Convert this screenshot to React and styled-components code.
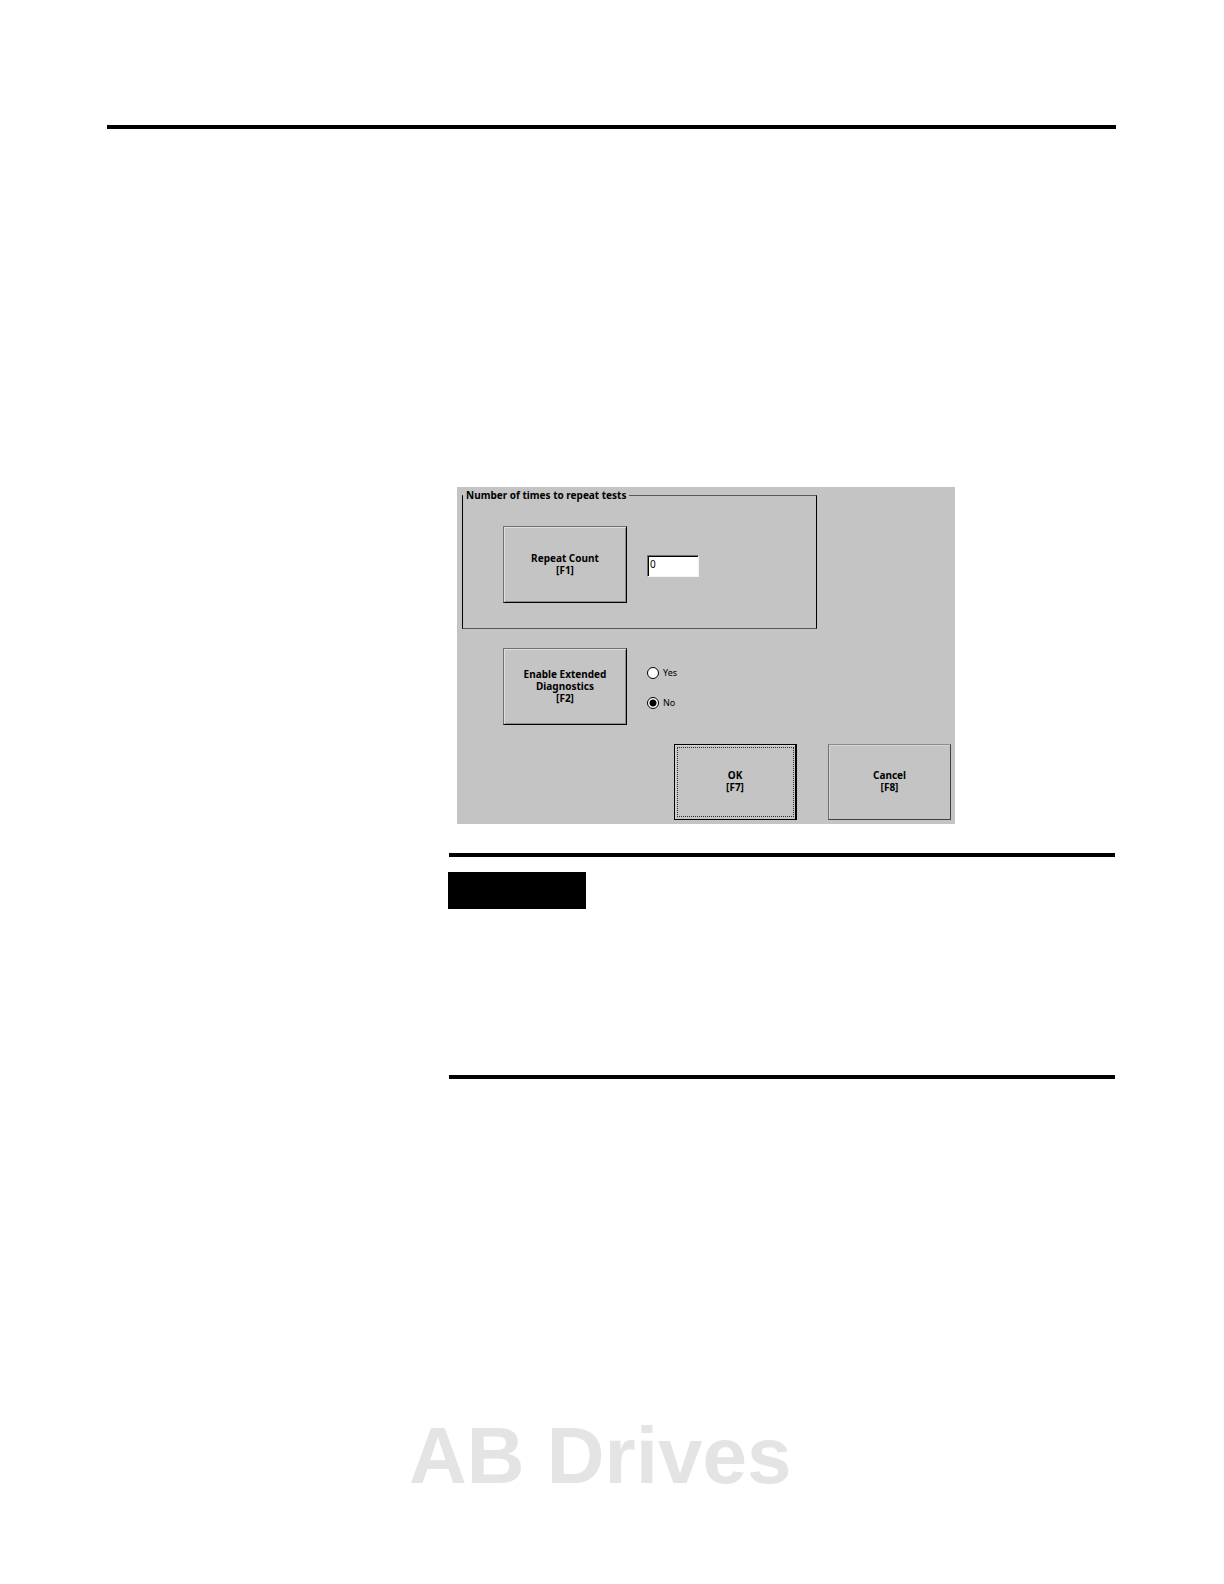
import React, { useState } from "react";
import styled, { createGlobalStyle } from "styled-components";

const App = () => {
  const [count, setCount] = useState("0");
  const [extended, setExtended] = useState("no");

  return (
    <>
      <GlobalStyle />
      <Page>
        <Rule />

        <Body>
          <Panel onSubmit={(e) => e.preventDefault()}>
            <Group>
              <Legend>Number of times to repeat tests</Legend>
              <Row>
                <PanelButton type="button">
                  Repeat Count
                  <br />
                  [F1]
                </PanelButton>
                <Side>
                  <CountInput
                    type="text"
                    aria-label="Repeat Count"
                    value={count}
                    onChange={(e) => setCount(e.target.value)}
                  />
                </Side>
              </Row>
            </Group>

            <DiagnosticsRow>
              <PanelButton type="button">
                Enable Extended
                <br />
                Diagnostics
                <br />
                [F2]
              </PanelButton>
              <Side>
                <Option>
                  <Radio
                    name="extended"
                    checked={extended === "yes"}
                    onChange={() => setExtended("yes")}
                  />
                  Yes
                </Option>
                <Option>
                  <Radio
                    name="extended"
                    checked={extended === "no"}
                    onChange={() => setExtended("no")}
                  />
                  No
                </Option>
              </Side>
            </DiagnosticsRow>

            <Actions>
              <OkButton type="submit">
                OK
                <br />
                [F7]
              </OkButton>
              <ActionButton type="button">
                Cancel
                <br />
                [F8]
              </ActionButton>
            </Actions>
          </Panel>

          <Note>
            <NoteTag />
          </Note>
        </Body>

        <Watermark>AB Drives</Watermark>
      </Page>
    </>
  );
};

export default App;

/* ================== STYLES ================== */
const GlobalStyle = createGlobalStyle`
  * {
    box-sizing: border-box;
  }

  body {
    margin: 0;
    background: #ffffff;
    color: #000000;
    font-family: "Noto Sans", sans-serif;
  }
`;

const Page = styled.main`
  min-height: 100vh;
  padding: 125px 108px 80px 107px;
`;

const Rule = styled.hr`
  height: 4px;
  margin: 0;
  border: none;
  background: #000000;
`;

const Body = styled.div`
  padding: 358px 1px 0 342px;
`;

const Panel = styled.form`
  max-width: 498px;
  margin-left: 8px;
  padding: 2px 4px 4px 5px;
  background: #c4c4c4;
`;

const Group = styled.fieldset`
  max-width: 355px;
  min-width: 0;
  margin: 0;
  padding: 25px 0 25px 40px;
  border: 1px solid #000000;
  border-top-color: #585858;
  border-bottom-color: #585858;
`;

const Legend = styled.legend`
  margin-left: -40px;
  padding: 0 3px;
  font-size: 10px;
  font-weight: 700;
  line-height: 12px;
`;

const Row = styled.div`
  display: flex;
  align-items: center;
  gap: 20px;
`;

const DiagnosticsRow = styled(Row)`
  padding: 19px 0 19px 41px;
`;

const PanelButton = styled.button`
  width: 124px;
  height: 77px;
  padding: 0 0 2px;
  border: 1px solid #000000;
  border-top-color: #707070;
  border-left-color: #707070;
  border-radius: 0;
  background: #c4c4c4;
  box-shadow: inset 1px 1px 0 #dedede, inset -1px -1px 0 #8c8c8c;
  color: #000000;
  font-family: "Noto Sans", sans-serif;
  font-size: 10px;
  font-weight: 700;
  line-height: 12px;
  cursor: pointer;
`;

const ActionButton = styled(PanelButton)`
  width: 123px;
  height: 76px;
  border-color: #8c8c8c #404040 #404040 #707070;
  box-shadow: inset 1px 1px 0 #d4d4d4;
`;

const OkButton = styled(ActionButton)`
  border-color: #000000;
  border-right-width: 2px;
  outline: 1px dotted #303030;
  outline-offset: -4px;
`;

const Side = styled.div`
  display: flex;
  flex-direction: column;
  gap: 18px;
  padding-top: 3px;
`;

const CountInput = styled.input`
  width: 52px;
  height: 22px;
  padding: 0 2px 4px;
  border: 1px solid #f4f4f4;
  border-top-color: #707070;
  border-left-color: #707070;
  border-radius: 0;
  background: #ffffff;
  box-shadow: inset 1px 1px 0 #000000;
  color: #000000;
  font-family: "Noto Sans", sans-serif;
  font-size: 10px;
  outline: none;
`;

const Option = styled.label`
  display: flex;
  align-items: center;
  gap: 4px;
  font-size: 9px;
  line-height: 12px;
`;

const Radio = styled.input.attrs({ type: "radio" })`
  appearance: none;
  width: 12px;
  height: 12px;
  margin: 0;
  border: 1px solid #000000;
  border-radius: 50%;
  background: ${({ checked }) =>
    checked ? "radial-gradient(circle, #000000 3px, #ffffff 4px)" : "#ffffff"};
`;

const Actions = styled.div`
  display: flex;
  justify-content: flex-end;
  gap: 31px;
`;

const Note = styled.section`
  height: 226px;
  margin-top: 29px;
  padding-top: 15px;
  border-top: 4px solid #000000;
  border-bottom: 4px solid #000000;
`;

const NoteTag = styled.div`
  width: 138px;
  height: 37px;
  margin-left: -1px;
  background: #000000;
`;

const Watermark = styled.div`
  padding: 337px 0 0 302px;
  color: #e4e4e4;
  font-family: "Liberation Sans", Arial, sans-serif;
  font-size: 80px;
  font-weight: 700;
  line-height: 80px;
`;
